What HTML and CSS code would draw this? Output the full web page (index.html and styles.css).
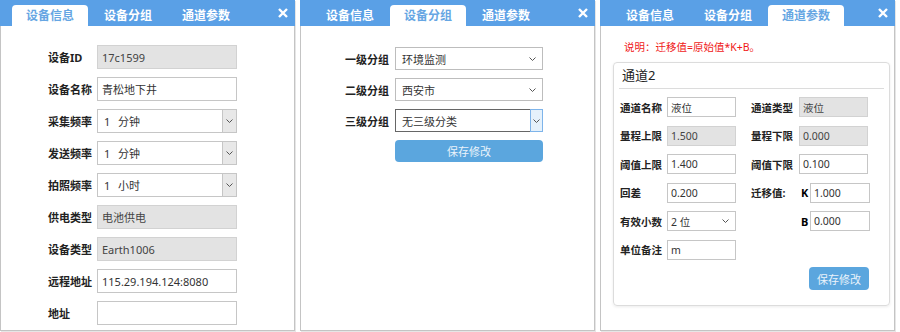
FILE: index.html
```html
<!DOCTYPE html>
<html lang="zh-CN">
<head>
    <meta charset="UTF-8">
    <title>设备设置</title>
    <link rel="stylesheet" href="styles.css">
</head>
<body>

    <!-- 设备信息 -->
    <div class="panel">
        <div class="panel-head">
            <div class="tabs">
                <span class="tab active">设备信息</span>
                <span class="tab">设备分组</span>
                <span class="tab">通道参数</span>
            </div>
            <svg class="close" width="10" height="10" viewBox="0 0 10 10"><path d="M1 1L9 9M9 1L1 9"/></svg>
        </div>
        <div class="info-body">
            <div class="row"><label>设备ID</label><input class="field" value="17c1599" disabled></div>
            <div class="row"><label>设备名称</label><input class="field" value="青松地下井"></div>
            <div class="row"><label>采集频率</label>
                <div class="field select boxed"><span class="num">1</span>分钟<span class="drop"><svg width="7" height="4" viewBox="0 0 7 4"><path d="M0.5 0.5L3.5 3.5L6.5 0.5"/></svg></span></div>
            </div>
            <div class="row"><label>发送频率</label>
                <div class="field select boxed"><span class="num">1</span>分钟<span class="drop"><svg width="7" height="4" viewBox="0 0 7 4"><path d="M0.5 0.5L3.5 3.5L6.5 0.5"/></svg></span></div>
            </div>
            <div class="row"><label>拍照频率</label>
                <div class="field select boxed"><span class="num">1</span>小时<span class="drop"><svg width="7" height="4" viewBox="0 0 7 4"><path d="M0.5 0.5L3.5 3.5L6.5 0.5"/></svg></span></div>
            </div>
            <div class="row"><label>供电类型</label><input class="field" value="电池供电" disabled></div>
            <div class="row"><label>设备类型</label><input class="field" value="Earth1006" disabled></div>
            <div class="row"><label>远程地址</label><input class="field" value="115.29.194.124:8080"></div>
            <div class="row"><label>地址</label><input class="field" value=""></div>
        </div>
    </div>

    <!-- 设备分组 -->
    <div class="panel">
        <div class="panel-head">
            <div class="tabs">
                <span class="tab">设备信息</span>
                <span class="tab active">设备分组</span>
                <span class="tab">通道参数</span>
            </div>
            <svg class="close" width="10" height="10" viewBox="0 0 10 10"><path d="M1 1L9 9M9 1L1 9"/></svg>
        </div>
        <div class="group-body">
            <div class="row"><label>一级分组</label>
                <div class="field select">环境监测<span class="arrow"><svg width="7" height="4" viewBox="0 0 7 4"><path d="M0.5 0.5L3.5 3.5L6.5 0.5"/></svg></span></div>
            </div>
            <div class="row"><label>二级分组</label>
                <div class="field select">西安市<span class="arrow"><svg width="7" height="4" viewBox="0 0 7 4"><path d="M0.5 0.5L3.5 3.5L6.5 0.5"/></svg></span></div>
            </div>
            <div class="row"><label>三级分组</label>
                <div class="field select focus">无三级分类<span class="drop"><svg width="7" height="4" viewBox="0 0 7 4"><path d="M0.5 0.5L3.5 3.5L6.5 0.5"/></svg></span></div>
            </div>
            <button class="save-btn wide">保存修改</button>
        </div>
    </div>

    <!-- 通道参数 -->
    <div class="panel">
        <div class="panel-head">
            <div class="tabs">
                <span class="tab">设备信息</span>
                <span class="tab">设备分组</span>
                <span class="tab active">通道参数</span>
            </div>
            <svg class="close" width="10" height="10" viewBox="0 0 10 10"><path d="M1 1L9 9M9 1L1 9"/></svg>
        </div>
        <div class="channel-body">
            <p class="note">说明：迁移值=原始值*K+B。</p>
            <div class="card">
                <div class="card-title">通道2</div>
                <div class="grid">
                    <label>通道名称</label><input class="field" value="液位"><span></span>
                    <label>通道类型</label><input class="field" value="液位" disabled>

                    <label>量程上限</label><input class="field" value="1.500" disabled><span></span>
                    <label>量程下限</label><input class="field" value="0.000" disabled>

                    <label>阈值上限</label><input class="field" value="1.400"><span></span>
                    <label>阈值下限</label><input class="field" value="0.100">

                    <label>回差</label><input class="field" value="0.200"><span></span>
                    <label>迁移值:</label><div class="kb"><b>K</b><input class="field" value="1.000"></div>

                    <label>有效小数</label>
                    <div class="field select">2&nbsp;位<span class="arrow"><svg width="7" height="4" viewBox="0 0 7 4"><path d="M0.5 0.5L3.5 3.5L6.5 0.5"/></svg></span></div><span></span>
                    <span></span><div class="kb"><b>B</b><input class="field" value="0.000"></div>

                    <label>单位备注</label><input class="field" value="m">
                </div>
                <div class="card-foot"><button class="save-btn">保存修改</button></div>
            </div>
        </div>
    </div>

</body>
</html>
```

FILE: styles.css
```css
body {
    margin: 0;
    background: #fff;
    font-family: "Noto Sans", "Noto Sans CJK SC", sans-serif;
    display: flex;
    gap: 5px;
    height: 332px;
    overflow: hidden;
}

.panel {
    width: 295px;
    height: 331px;
    box-sizing: border-box;
    border: 1px solid #c4c4c4;
    border-top: none;
    box-shadow: 1px 1px 0 #e6e6e6;
    background: #fff;
}

.panel-head {
    height: 26px;
    margin: 0 -1px;
    background: #5aa0e6;
    display: flex;
    align-items: flex-end;
    padding-left: 12px;
}

.tabs {
    display: flex;
    gap: 2px;
}

.tab {
    width: 76px;
    height: 21px;
    line-height: 21px;
    text-align: center;
    font-size: 12px;
    font-weight: bold;
    color: #fff;
    border-radius: 4px 4px 0 0;
}

.tab.active {
    background: #fff;
    color: #66a6e3;
}

.close {
    margin-left: auto;
    margin-right: 7px;
    align-self: center;
    fill: none;
    stroke: #fff;
    stroke-width: 2.4;
}

label {
    font-size: 11px;
    font-weight: bold;
    color: #222;
}

.field {
    box-sizing: border-box;
    height: 24px;
    border: 1px solid #c6c6c6;
    background: #fff;
    font-family: "Noto Sans", "Noto Sans CJK SC", sans-serif;
    font-size: 11px;
    color: #333;
    padding: 0 4px;
    margin: 0;
    outline: none;
}

.field:disabled {
    background: #e3e3e3;
    border-color: #d2d2d2;
    color: #444;
}

.select {
    display: flex;
    align-items: center;
    position: relative;
}

.select .num {
    width: 14px;
    padding-left: 2px;
}

.drop {
    margin-left: auto;
    margin-right: -4px;
    width: 13px;
    height: 100%;
    border-left: 1px solid #c6c6c6;
    background: #e8e8e8;
    display: flex;
    align-items: center;
    justify-content: center;
}

.arrow {
    margin-left: auto;
    margin-right: 2px;
    display: flex;
}

.select svg {
    fill: none;
    stroke: #555;
    stroke-width: 1;
}

/* 设备信息 */
.info-body {
    padding: 19px 0 0 47px;
    display: flex;
    flex-direction: column;
    gap: 8px;
}

.row {
    display: flex;
    align-items: center;
}

.info-body label {
    width: 49px;
}

.info-body .field {
    width: 140px;
}

/* 设备分组 */
.group-body {
    padding: 21px 0 0 39px;
    display: flex;
    flex-direction: column;
    gap: 8px;
}

.group-body label {
    width: 49px;
    text-align: right;
    margin-right: 6px;
}

.group-body .field {
    width: 148px;
    height: 23px;
    border-color: #bdbdbd;
    padding-left: 6px;
}

.group-body .field.focus {
    border-color: #666;
}

.focus .drop {
    background: #e5f1fb;
    border: 1px solid #7eb4ea;
    height: 23px;
    margin-right: -5px;
    box-sizing: border-box;
}

.save-btn {
    border: none;
    border-radius: 4px;
    background: #5ba6de;
    color: #eaf3fb;
    font-family: "Noto Sans CJK SC", sans-serif;
    font-size: 11px;
    width: 60px;
    height: 23px;
    padding: 0;
}

.save-btn.wide {
    width: 148px;
    height: 22px;
    margin-left: 55px;
}

/* 通道参数 */
.channel-body {
    padding: 14px 0 0 0;
}

.note {
    margin: 0 0 8px 23px;
    font-size: 10.5px;
    line-height: 14px;
    color: #f01818;
}

.card {
    margin: 0 4px 0 12px;
    border: 1px solid #dcdcdc;
    border-radius: 4px;
    box-shadow: 0 1px 3px rgba(0, 0, 0, 0.08);
    padding: 0 6px 15px 6px;
}

.card-title {
    height: 25px;
    line-height: 25px;
    margin: 0 -1px;
    padding-left: 3px;
    font-size: 13px;
    color: #222;
    border-bottom: 1px solid #dcdcdc;
}

.grid {
    display: grid;
    grid-template-columns: 47px 69px 15px 48px 71px;
    grid-auto-rows: 20px;
    row-gap: 8.6px;
    align-items: center;
    margin-top: 8px;
}

.grid label {
    font-size: 10.5px;
}

.grid .field {
    height: 20px;
    font-size: 10.5px;
    padding-left: 3px;
}

.grid input.field {
    width: 69px;
}

.grid .kb {
    display: flex;
    align-items: center;
    justify-content: space-between;
}

.kb b {
    font-size: 11px;
    padding-left: 2px;
}

.grid .kb .field {
    width: 60px;
}

.card-foot {
    margin-top: 7px;
    padding-left: 189px;
}
```
